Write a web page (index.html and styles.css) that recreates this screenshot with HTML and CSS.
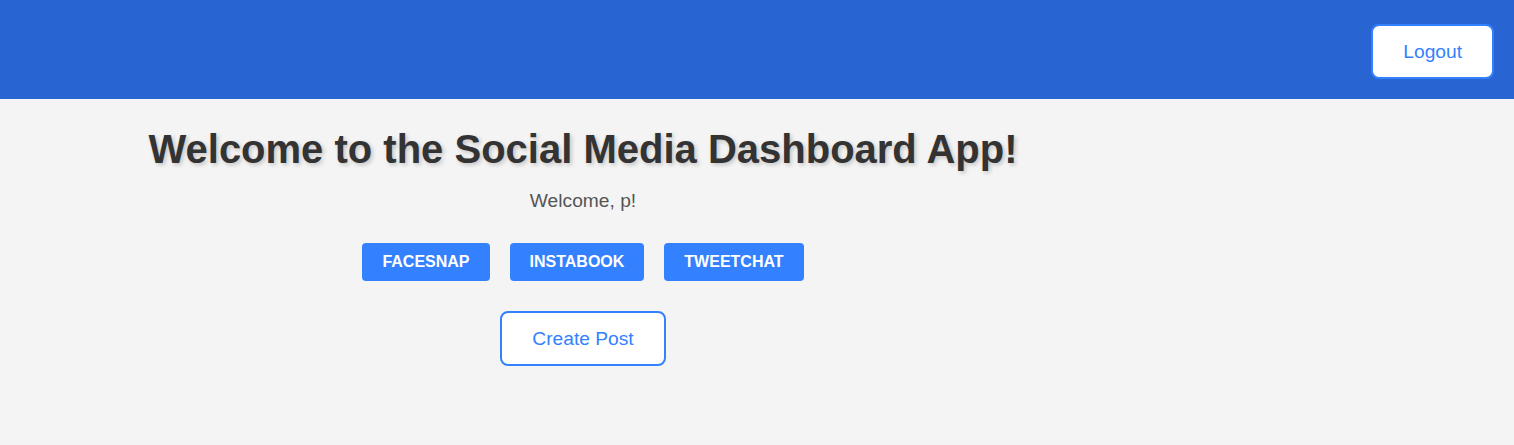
FILE: index.html
```html
<!DOCTYPE html>
<html lang="en">
<head>
<meta charset="utf-8">
<title>Social Media Dashboard</title>
<link rel="stylesheet" href="styles.css">
</head>
<body>
<header class="topbar">
  <button class="btn-outline">Logout</button>
</header>
<main class="content">
  <h1 class="title">Welcome to the Social Media Dashboard App!</h1>
  <p class="greeting">Welcome, p!</p>
  <div class="platforms">
    <button class="btn-platform">FACESNAP</button>
    <button class="btn-platform">INSTABOOK</button>
    <button class="btn-platform">TWEETCHAT</button>
  </div>
  <button class="btn-outline">Create Post</button>
</main>
</body>
</html>
```

FILE: styles.css
```css
html, body {
  margin: 0;
  padding: 0;
}
body {
  background: #f4f4f4;
  font-family: "Liberation Sans", Arial, sans-serif;
  height: 445px;
}
.topbar {
  background: #2864d2;
  display: flex;
  justify-content: flex-end;
  align-items: flex-start;
  padding: 24px 20px 20px 0;
}
.btn-outline {
  font-family: "Liberation Sans", Arial, sans-serif;
  font-size: 19.2px;
  line-height: 21px;
  color: #3381ff;
  background: #fff;
  border: 2px solid #3381ff;
  border-radius: 8px;
  padding: 15px 30px;
  cursor: pointer;
}
.content {
  width: 1166px;
  display: flex;
  flex-direction: column;
  align-items: center;
}
.title {
  margin: 27px 0 18px;
  font-size: 40px;
  line-height: 46px;
  font-weight: bold;
  color: #333;
  text-shadow: 2px 2px 4px rgba(0, 0, 0, 0.2);
}
.greeting {
  margin: 0 0 31px;
  font-size: 19.2px;
  line-height: 22px;
  color: #555;
}
.platforms {
  display: flex;
  gap: 20px;
  margin-bottom: 30px;
}
.btn-platform {
  font-family: "Liberation Sans", Arial, sans-serif;
  font-size: 16px;
  font-weight: bold;
  line-height: 18px;
  color: #fff;
  background: #3381ff;
  border: none;
  border-radius: 4px;
  padding: 10px 20px;
  cursor: pointer;
}
```
